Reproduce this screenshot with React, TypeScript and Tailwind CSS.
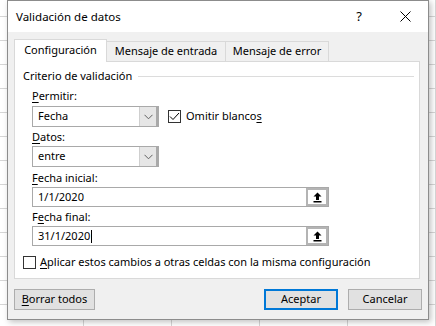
import React from 'react'

const font = { fontFamily: '"Noto Sans", "Liberation Sans", sans-serif' }

const Chevron = () => (
  <svg width="9" height="6" viewBox="0 0 9 6" className="block">
    <path d="M0.5 0.8 L4.5 4.8 L8.5 0.8" fill="none" stroke="#606060" strokeWidth="1" />
  </svg>
)

const UpArrow = () => (
  <svg width="9" height="11" viewBox="0 0 9 11" className="block">
    <path d="M4.5 0.5 L8.5 4.5 L6 4.5 L6 8 L3 8 L3 4.5 L0.5 4.5 Z" fill="#000" />
    <rect x="0.5" y="9" width="8" height="1.5" fill="#000" />
  </svg>
)

const Select = ({ value }: { value: string }) => (
  <div className="flex h-[21px] w-[127px] border border-[#a9a9a9] bg-white">
    <div className="flex flex-1 items-center pl-[5px] text-[11px] text-black">{value}</div>
    <div className="flex w-[19px] items-center justify-center border-l border-[#cfcfcf] border-r-2 border-r-[#a9a9a9] bg-[#e6e6e6]">
      <Chevron />
    </div>
  </div>
)

const RefInput = ({ value, caret }: { value: string; caret?: boolean }) => (
  <div className="flex h-[20px] w-[297px] border border-[#a9a9a9] bg-white">
    <div className="flex flex-1 items-center pl-[5px] text-[11px] text-black">
      {value}
      {caret && <span className="ml-px inline-block h-[13px] w-px bg-black" />}
    </div>
    <div className="flex w-[22px] items-center justify-center border-2 border-[#b4b4b4] bg-white">
      <UpArrow />
    </div>
  </div>
)

const Label = ({ k, rest }: { k: string; rest: string }) => (
  <div className="text-[11px] leading-[14px] text-black">
    <span className="underline underline-offset-2">{k}</span>
    {rest}
  </div>
)

export default function App() {
  return (
    <div
      className="relative h-[326px] w-[436px] overflow-hidden bg-white bg-[linear-gradient(to_right,#d6d6d6_1px,transparent_1px),linear-gradient(to_bottom,#d6d6d6_1px,transparent_1px)] bg-[size:88px_24px] bg-[position:83px_16px]"
      style={font}
    >
      <div className="ml-[7px] flex h-[320px] w-[422px] flex-col border border-[#8c8c8c] bg-[#f0f0f0] shadow-[2px_2px_6px_rgba(0,0,0,0.25)]">
        {/* title bar */}
        <div className="flex h-[31px] items-center bg-white">
          <div className="flex-1 pl-[8px] text-[11.5px] text-black">Validación de datos</div>
          <div className="w-[46px] text-center text-[13px] text-black">?</div>
          <div className="flex w-[46px] items-center justify-center">
            <svg width="11" height="11" viewBox="0 0 11 11" className="block">
              <path d="M0.5 0.5 L10.5 10.5 M10.5 0.5 L0.5 10.5" stroke="#000" strokeWidth="1" />
            </svg>
          </div>
        </div>

        {/* tabs */}
        <div className="mt-[7px] ml-[6px] flex h-[22px] items-end">
          <div className="relative z-10 -mb-px flex h-[23px] w-[93px] items-center justify-center border border-b-0 border-[#d9d9d9] bg-white pb-[2px] text-[11px] text-black">
            Configuración
          </div>
          <div className="flex h-[20px] w-[119px] items-center justify-center border border-l-0 border-b-0 border-[#d9d9d9] bg-[#f0f0f0] text-[11px] text-black">
            Mensaje de entrada
          </div>
          <div className="flex h-[20px] w-[103px] items-center justify-center border border-l-0 border-b-0 border-[#d9d9d9] bg-[#f0f0f0] text-[11px] text-black">
            Mensaje de error
          </div>
        </div>

        {/* panel */}
        <div className="ml-[6px] flex h-[218px] w-[406px] flex-col border border-[#d9d9d9] bg-white pl-[8px]">
          <div className="mt-[7px] flex items-center pr-[5px]">
            <span className="text-[11px] leading-[14px] text-black">Criterio de validación</span>
            <div className="ml-[6px] h-px flex-1 bg-[#dcdcdc]" />
          </div>

          <div className="mt-[6px] pl-[9px]">
            <Label k="P" rest="ermitir:" />
            <div className="mt-[3px] flex items-center">
              <Select value="Fecha" />
              <div className="ml-[9px] flex items-center">
                <div className="flex h-[13px] w-[13px] items-center justify-center border border-[#333] bg-white">
                  <svg width="11" height="9" viewBox="0 0 11 9" className="block">
                    <path d="M1 4.5 L4 7.5 L10 1" fill="none" stroke="#000" strokeWidth="1" />
                  </svg>
                </div>
                <span className="ml-[5px] text-[11px] text-black">
                  Omitir blanco<span className="underline underline-offset-2">s</span>
                </span>
              </div>
            </div>

            <div className="mt-[3px]">
              <Label k="D" rest="atos:" />
            </div>
            <div className="mt-[2px]">
              <Select value="entre" />
            </div>

            <div className="mt-[4px]">
              <Label k="F" rest="echa inicial:" />
            </div>
            <div className="mt-[2px]">
              <RefInput value="1/1/2020" />
            </div>

            <div className="mt-[3px] text-[11px] leading-[14px] text-black">
              F<span className="underline underline-offset-2">e</span>cha final:
            </div>
            <div className="mt-[2px]">
              <RefInput value="31/1/2020" caret />
            </div>
          </div>

          <div className="mt-[8px] flex items-center">
            <div className="h-[13px] w-[13px] border border-[#333] bg-white" />
            <span className="ml-[4px] text-[11px] text-black">
              <span className="underline underline-offset-2">A</span>plicar estos cambios a otras celdas con la misma configuración
            </span>
          </div>
        </div>

        {/* buttons */}
        <div className="mt-[10px] flex px-[6px]">
          <div className="flex h-[21px] w-[81px] items-center justify-center border border-[#adadad] bg-[#e1e1e1] text-[11px] text-black">
            <span>
              <span className="underline underline-offset-2">B</span>orrar todos
            </span>
          </div>
          <div className="flex-1" />
          <div className="flex h-[21px] w-[74px] items-center justify-center border-2 border-[#0078d7] bg-[#e1e1e1] text-[11px] text-black">
            Aceptar
          </div>
          <div className="ml-[10px] flex h-[21px] w-[74px] items-center justify-center border border-[#adadad] bg-[#e1e1e1] text-[11px] text-black">
            Cancelar
          </div>
        </div>
      </div>
    </div>
  )
}
